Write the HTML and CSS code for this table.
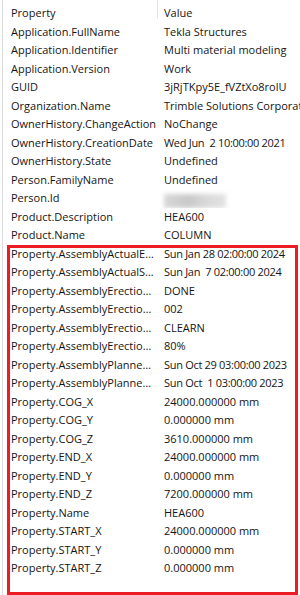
FILE: index.html
```
<!DOCTYPE html>
<html>
<head>
<meta charset="utf-8">
<link rel="stylesheet" href="styles.css">
</head>
<body>
<div class="panel">
  <div class="table">
    <div class="row head"><div class="name">Property</div><div class="val">Value</div></div>
    <div class="row"><div class="name">Application.FullName</div><div class="val">Tekla Structures</div></div>
    <div class="row"><div class="name">Application.Identifier</div><div class="val">Multi material modeling</div></div>
    <div class="row"><div class="name">Application.Version</div><div class="val">Work</div></div>
    <div class="row"><div class="name">GUID</div><div class="val">3jRjTKpy5E_fVZtXo8rolU</div></div>
    <div class="row"><div class="name">Organization.Name</div><div class="val">Trimble Solutions Corporation</div></div>
    <div class="row"><div class="name">OwnerHistory.ChangeAction</div><div class="val">NoChange</div></div>
    <div class="row"><div class="name">OwnerHistory.CreationDate</div><div class="val date">Wed Jun &nbsp;2 10:00:00 2021</div></div>
    <div class="row"><div class="name">OwnerHistory.State</div><div class="val">Undefined</div></div>
    <div class="row"><div class="name">Person.FamilyName</div><div class="val">Undefined</div></div>
    <div class="row"><div class="name">Person.Id</div><div class="val"><span class="blur"></span></div></div>
    <div class="row"><div class="name">Product.Description</div><div class="val">HEA600</div></div>
    <div class="row"><div class="name">Product.Name</div><div class="val">COLUMN</div></div>
    <div class="group">
      <div class="highlight"></div>
      <div class="row"><div class="name">Property.AssemblyActualEndDate</div><div class="val date">Sun Jan 28 02:00:00 2024</div></div>
      <div class="row"><div class="name">Property.AssemblyActualStartDate</div><div class="val date">Sun Jan &nbsp;7 02:00:00 2024</div></div>
      <div class="row"><div class="name">Property.AssemblyErectionCompleted</div><div class="val">DONE</div></div>
      <div class="row"><div class="name">Property.AssemblyErectionCrew</div><div class="val">002</div></div>
      <div class="row"><div class="name">Property.AssemblyErectionContractor</div><div class="val">CLEARN</div></div>
      <div class="row"><div class="name">Property.AssemblyErectionStatus</div><div class="val">80%</div></div>
      <div class="row"><div class="name">Property.AssemblyPlannedEndDate</div><div class="val date">Sun Oct 29 03:00:00 2023</div></div>
      <div class="row"><div class="name">Property.AssemblyPlannedStartDate</div><div class="val date">Sun Oct &nbsp;1 03:00:00 2023</div></div>
      <div class="row"><div class="name">Property.COG_X</div><div class="val">24000.000000 mm</div></div>
      <div class="row"><div class="name">Property.COG_Y</div><div class="val">0.000000 mm</div></div>
      <div class="row"><div class="name">Property.COG_Z</div><div class="val">3610.000000 mm</div></div>
      <div class="row"><div class="name">Property.END_X</div><div class="val">24000.000000 mm</div></div>
      <div class="row"><div class="name">Property.END_Y</div><div class="val">0.000000 mm</div></div>
      <div class="row"><div class="name">Property.END_Z</div><div class="val">7200.000000 mm</div></div>
      <div class="row"><div class="name">Property.Name</div><div class="val">HEA600</div></div>
      <div class="row"><div class="name">Property.START_X</div><div class="val">24000.000000 mm</div></div>
      <div class="row"><div class="name">Property.START_Y</div><div class="val">0.000000 mm</div></div>
      <div class="row"><div class="name">Property.START_Z</div><div class="val">0.000000 mm</div></div>
    </div>
  </div>
</div>
</body>
</html>
```

FILE: styles.css
```
html, body {
  margin: 0;
  padding: 0;
  background: #ffffff;
}
body {
  width: 300px;
  height: 595px;
  overflow: hidden;
  font-family: "Open Sans", "Noto Sans", sans-serif;
  font-size: 11px;
  color: #151515;
}
.panel {
  padding-left: 2px;
  height: 595px;
}
.table {
  border-left: 1px solid #dcdcdc;
  height: 595px;
  padding-top: 4px;
  box-sizing: border-box;
}
.row {
  display: flex;
  height: 18.5px;
  line-height: 18.5px;
  white-space: nowrap;
}
.name {
  width: 146px;
  flex: none;
  padding-left: 8px;
  overflow: hidden;
  text-overflow: ellipsis;
}
.val {
  flex: 1;
  min-width: 0;
  padding-left: 7px;
  overflow: hidden;
}
.date {
  letter-spacing: -0.3px;
}
.head {
  margin-top: -4px;
  height: 22.5px;
}
.head .name {
  padding-top: 4px;
}
.head .val {
  border-left: 1px solid #e3e3e3;
  padding-left: 6px;
  padding-top: 4px;
  height: 18px;
  box-sizing: border-box;
  overflow: visible;
}
.blur {
  display: inline-block;
  width: 62px;
  height: 14px;
  vertical-align: middle;
  margin-top: 3px;
  background: linear-gradient(90deg, #d8d8d8, #c9c9c9 40%, #dadada 70%, #e2e2e2);
  filter: blur(2px);
}
.group {
  position: relative;
}
.highlight {
  position: absolute;
  left: 4px;
  right: 2px;
  top: 0;
  height: 350px;
  border: 3px solid #ec1c24;
  box-sizing: border-box;
  pointer-events: none;
}
```
